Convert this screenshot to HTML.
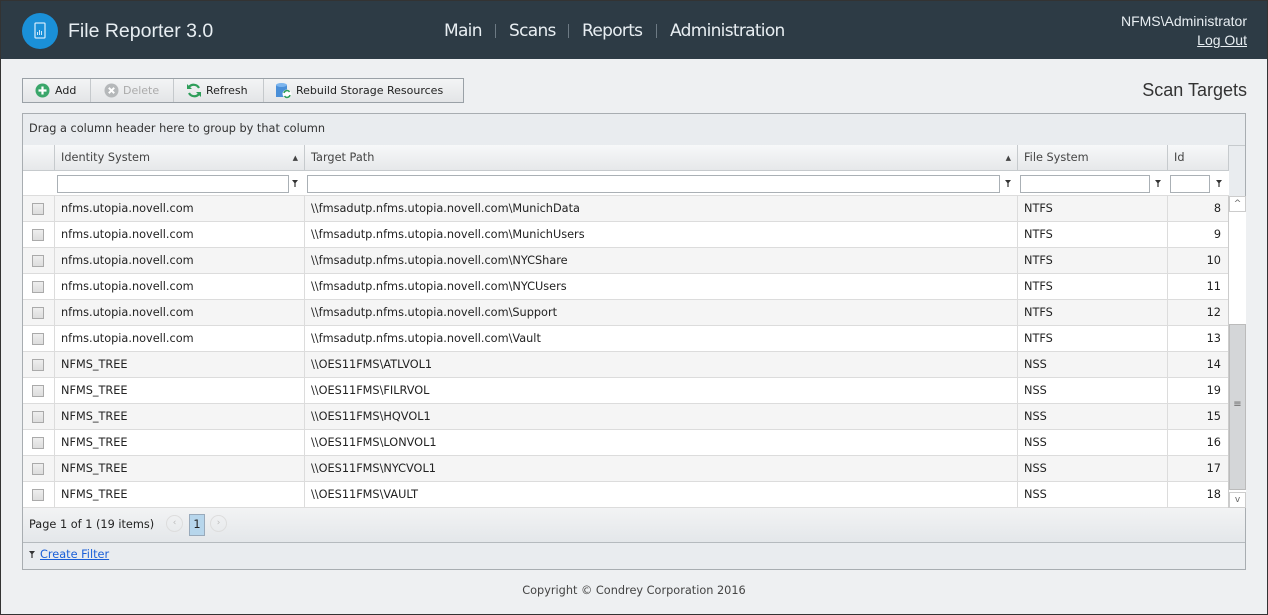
<!DOCTYPE html>
<html><head><meta charset="utf-8"><style>
*{box-sizing:border-box;margin:0;padding:0}
body{width:1268px;height:615px;background:#eef0f2;font-family:"DejaVu Sans",Verdana,sans-serif;font-size:11.3px;color:#222;position:relative;overflow:hidden}
.frame{position:absolute;left:0;top:0;width:1268px;height:615px;border:1px solid #333;z-index:9;pointer-events:none}
.hdr{position:absolute;left:0;top:0;width:1268px;height:59px;background:#2d3b45;color:#eef}
.a{position:absolute}
.logo{left:22px;top:13px;width:36px;height:36px;border-radius:50%;background:#1a90d8}
.title{left:68px;top:20px;font-family:"Liberation Sans",sans-serif;font-size:19.5px;color:#e8eef2}
.nav{top:21px;font-size:17px;color:#e8eef2;font-family:"DejaVu Sans",sans-serif;letter-spacing:-0.7px}
.sep{top:24px;width:1px;height:14px;background:#6d7a84}
.tb{left:22px;top:78px;width:442px;height:25px;border:1px solid #9aa1a7;background:linear-gradient(#f3f4f5,#e3e5e7)}
.tbs{top:0;width:1px;height:23px;background:#c5c9cc}
.tbt{top:5px;font-size:11px}
.grid{left:22px;top:113px;width:1224px;height:457px;border:1px solid #a8adb1;background:#e9ecef}
.cell{position:absolute;height:26px;line-height:26px;padding-left:6px;border-right:1px solid #dcdcdc;border-bottom:1px solid #dcdcdc;white-space:nowrap;overflow:hidden}
.hc{position:absolute;top:31px;height:26px;line-height:26px;padding-left:6px;border-right:1px solid #c6cacd;border-bottom:1px solid #c6cacd;background:linear-gradient(#f7f8f9,#e6e8ea);color:#444;font-size:11.3px}
.fi{position:absolute;top:61px;height:18px;border:1px solid #aab0b5;background:#fff}
.fun{position:absolute;top:66px}
.cb{display:inline-block;width:12px;height:12px;border:1px solid #aaa;background:linear-gradient(#eee,#ddd);vertical-align:middle;margin-left:4px}
</style></head><body>
<div class="frame"></div>
<div class="hdr">
<div class="a logo"><svg width="36" height="36"><rect x="13" y="10" width="10" height="15" rx="1" fill="none" stroke="#cde8fa" stroke-width="1.3"/><path d="M15.5 22v-3M17.5 22v-5M19.5 22v-4" stroke="#cde8fa" stroke-width="1"/></svg></div>
<div class="a title">File Reporter 3.0</div>
<div class="a nav" style="left:444px">Main</div>
<div class="a sep" style="left:495px"></div>
<div class="a nav" style="left:509px">Scans</div>
<div class="a sep" style="left:568px"></div>
<div class="a nav" style="left:582px">Reports</div>
<div class="a sep" style="left:656px"></div>
<div class="a nav" style="left:670px">Administration</div>
<div class="a" style="right:21px;top:12px;font-family:'Liberation Sans',sans-serif;font-size:14px;color:#e8eef2;text-align:right;line-height:19px">NFMS\Administrator<br><span style="text-decoration:underline">Log Out</span></div>
</div>
<div class="a tb">
<svg class="a" style="left:12px;top:4px" width="15" height="15"><circle cx="7.5" cy="7.5" r="7" fill="#3aa66a"/><path d="M7.5 3.5v8M3.5 7.5h8" stroke="#fff" stroke-width="2.2"/></svg>
<div class="a tbt" style="left:32px">Add</div>
<div class="a tbs" style="left:67px"></div>
<svg class="a" style="left:81px;top:4px" width="15" height="15"><circle cx="7.5" cy="7.5" r="7" fill="#b5b8ba"/><path d="M4.8 4.8l5.4 5.4M10.2 4.8l-5.4 5.4" stroke="#fff" stroke-width="2"/></svg>
<div class="a tbt" style="left:100px;color:#aaa">Delete</div>
<div class="a tbs" style="left:150px"></div>
<svg class="a" style="left:163px;top:3px" width="16" height="17"><path d="M13 6A6 6 0 0 0 3 5M3 11a6 6 0 0 0 10 1" fill="none" stroke="#2f9e5a" stroke-width="2.2"/><path d="M1 2v5h5zM15 15v-5h-5z" fill="#2f9e5a"/></svg>
<div class="a tbt" style="left:183px">Refresh</div>
<div class="a tbs" style="left:240px"></div>
<svg class="a" style="left:252px;top:3px" width="18" height="17"><rect x="1" y="3" width="11" height="12" fill="#4a8fd8"/><ellipse cx="6.5" cy="3" rx="5.5" ry="2" fill="#7cb5ee"/><circle cx="12" cy="12" r="4.5" fill="#fff"/><path d="M9 11a3 3 0 0 1 5.5-1M15 13a3 3 0 0 1-5.5 1" fill="none" stroke="#2f9e5a" stroke-width="1.5"/></svg>
<div class="a tbt" style="left:273px">Rebuild Storage Resources</div>
</div>
<div class="a" style="right:21px;top:80px;font-family:'Liberation Sans',sans-serif;font-size:18px;color:#333">Scan Targets</div>
<div class="a grid">
<div class="a" style="left:6px;top:8px;color:#333">Drag a column header here to group by that column</div>
<div style="position:absolute;left:0;top:31px;width:1222px;height:1px;background:#c6cacd"></div>
<div class="hc" style="left:0;width:32px"></div>
<div class="hc" style="left:32px;width:250px">Identity System<span style="position:absolute;right:6px;font-size:7px">▲</span></div>
<div class="hc" style="left:282px;width:713px">Target Path<span style="position:absolute;right:6px;font-size:7px">▲</span></div>
<div class="hc" style="left:995px;width:150px">File System</div>
<div class="hc" style="left:1145px;width:61px">Id</div>
<div style="position:absolute;left:0;top:57px;width:1206px;height:25px;background:#fff;border-bottom:1px solid #dcdcdc"></div>
<div class="fi" style="left:34px;width:232px"></div><svg class="fun" style="left:269px" width="6" height="7"><path d="M0 0h6L3.6 3v4H2.4V3z" fill="#333"/></svg>
<div class="fi" style="left:284px;width:693px"></div><svg class="fun" style="left:982px" width="6" height="7"><path d="M0 0h6L3.6 3v4H2.4V3z" fill="#333"/></svg>
<div class="fi" style="left:997px;width:130px"></div><svg class="fun" style="left:1132px" width="6" height="7"><path d="M0 0h6L3.6 3v4H2.4V3z" fill="#333"/></svg>
<div class="fi" style="left:1147px;width:40px"></div><svg class="fun" style="left:1193px" width="6" height="7"><path d="M0 0h6L3.6 3v4H2.4V3z" fill="#333"/></svg>
<div id="rows"></div>
<div style="position:absolute;left:1205px;top:82px;width:18px;height:312px;background:#fff;border-left:1px solid #ccc">
<div style="position:absolute;left:0;top:0;width:17px;height:16px;border:1px solid #ccc;font-size:9px;text-align:center;line-height:14px;color:#666">^</div>
<div style="position:absolute;left:0;top:128px;width:17px;height:166px;background:#d4d6d8;border:1px solid #bbb;text-align:center;line-height:160px;color:#666;font-size:10px">≡</div>
<div style="position:absolute;left:0;bottom:0;width:17px;height:16px;border:1px solid #ccc;font-size:9px;text-align:center;line-height:14px;color:#666">v</div>
</div>
<div style="position:absolute;left:0;top:394px;width:1222px;height:35px;background:linear-gradient(#f2f3f4,#e4e7ea);border-bottom:1px solid #b5babe">
<div class="a" style="left:6px;top:10px;color:#222">Page 1 of 1 (19 items)</div>
<div class="a" style="left:143px;top:7px;width:17px;height:17px;border-radius:50%;border:1px solid #ddd;color:#bbb;font-size:9px;text-align:center;line-height:15px">‹</div>
<div class="a" style="left:166px;top:6px;width:16px;height:22px;background:#b7d6ec;border:1px solid #9ab;text-align:center;line-height:20px">1</div>
<div class="a" style="left:187px;top:7px;width:17px;height:17px;border-radius:50%;border:1px solid #ddd;color:#bbb;font-size:9px;text-align:center;line-height:15px">›</div>
</div>
<svg class="a" style="left:6px;top:437px" width="6" height="7"><path d="M0 0h6L3.6 3v4H2.4V3z" fill="#333"/></svg>
<div class="a" style="left:17px;top:434px;color:#1a5fd8;text-decoration:underline">Create Filter</div>
</div>
<div class="a" style="left:0;width:1268px;top:584px;text-align:center;color:#444">Copyright © Condrey Corporation 2016</div>
<script>
var d=[["nfms.utopia.novell.com","\\\\fmsadutp.nfms.utopia.novell.com\\MunichData","NTFS",8],
["nfms.utopia.novell.com","\\\\fmsadutp.nfms.utopia.novell.com\\MunichUsers","NTFS",9],
["nfms.utopia.novell.com","\\\\fmsadutp.nfms.utopia.novell.com\\NYCShare","NTFS",10],
["nfms.utopia.novell.com","\\\\fmsadutp.nfms.utopia.novell.com\\NYCUsers","NTFS",11],
["nfms.utopia.novell.com","\\\\fmsadutp.nfms.utopia.novell.com\\Support","NTFS",12],
["nfms.utopia.novell.com","\\\\fmsadutp.nfms.utopia.novell.com\\Vault","NTFS",13],
["NFMS_TREE","\\\\OES11FMS\\ATLVOL1","NSS",14],["NFMS_TREE","\\\\OES11FMS\\FILRVOL","NSS",19],
["NFMS_TREE","\\\\OES11FMS\\HQVOL1","NSS",15],["NFMS_TREE","\\\\OES11FMS\\LONVOL1","NSS",16],
["NFMS_TREE","\\\\OES11FMS\\NYCVOL1","NSS",17],["NFMS_TREE","\\\\OES11FMS\\VAULT","NSS",18]];
var h="";d.forEach(function(r,i){var t=82+i*26,bg=i%2?"#fff":"#f5f5f5";
h+='<div class="cell" style="left:0;top:'+t+'px;width:32px;background:'+bg+';padding-left:5px"><span class="cb"></span></div>'+
'<div class="cell" style="left:32px;top:'+t+'px;width:250px;background:'+bg+'">'+r[0]+'</div>'+
'<div class="cell" style="left:282px;top:'+t+'px;width:713px;background:'+bg+'">'+r[1]+'</div>'+
'<div class="cell" style="left:995px;top:'+t+'px;width:150px;background:'+bg+'">'+r[2]+'</div>'+
'<div class="cell" style="left:1145px;top:'+t+'px;width:61px;background:'+bg+';text-align:right;padding-right:7px">'+r[3]+'</div>';});
document.getElementById("rows").innerHTML=h;
</script>
</body></html>
